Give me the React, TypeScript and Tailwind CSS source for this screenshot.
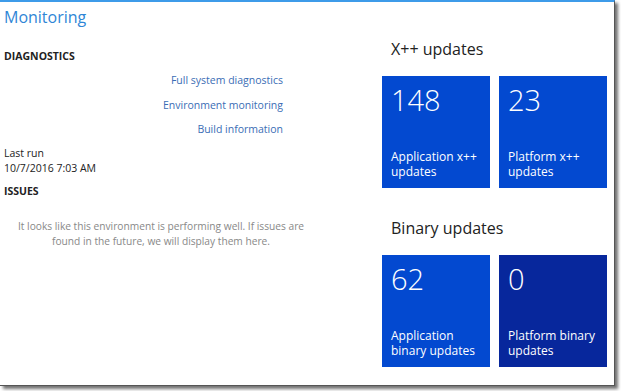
import React from "react";

const font = { fontFamily: '"Open Sans", "Noto Sans", sans-serif' };

function Tile({ value, label, dark }: { value: string; label: string; dark?: boolean }) {
  return (
    <div
      className={`flex h-[112px] w-[108px] flex-col justify-between px-[9px] pt-[7px] pb-[9px] text-white ${
        dark ? "bg-[#07279c]" : "bg-[#0349d0]"
      }`}
    >
      <div className="text-[29px] font-light leading-[34px]">{value}</div>
      <div className="text-[12px] leading-[15px]">{label}</div>
    </div>
  );
}

export default function App() {
  return (
    <div className="h-[391px] w-[621px] bg-white" style={font}>
      <div className="h-[386px] w-[615px] border-t-2 border-r border-b border-t-[#3d9be9] border-r-[#555] border-b-[#555] shadow-[3px_3px_3px_rgba(0,0,0,0.55)]">
        <h1 className="pl-[4px] pt-[3px] text-[16px] leading-[24px] text-[#2f86d6]">Monitoring</h1>
        <div className="flex">
          <div className="w-[330px] pl-[4px]">
            <div className="mt-[19px] text-[10.5px] leading-[16px] font-bold text-[#222]">DIAGNOSTICS</div>
            <div className="mt-[8px] flex w-[279px] flex-col items-end gap-[8.5px] text-[10.5px] leading-[16px] text-[#3a6db5]">
              <span>Full system diagnostics</span>
              <span>Environment monitoring</span>
              <span>Build information</span>
            </div>
            <div className="mt-[9px] text-[10.5px] leading-[15px] text-[#222]">
              <div>Last run</div>
              <div>10/7/2016 7:03 AM</div>
            </div>
            <div className="mt-[7px] text-[10.5px] leading-[16px] font-bold text-[#222]">ISSUES</div>
            <p className="ml-[7px] mt-[20px] w-[300px] text-center text-[10.2px] leading-[15px] text-[#888]">
              It looks like this environment is performing well. If issues are found in the future, we will display them here.
            </p>
          </div>
          <div className="pl-[52px]">
            <div className="mt-[9px] pl-[9px] text-[16px] leading-[22px] text-[#222]">X++ updates</div>
            <div className="mt-[16px] flex gap-[9px]">
              <Tile value="148" label="Application x++ updates" />
              <Tile value="23" label="Platform x++ updates" />
            </div>
            <div className="mt-[29px] pl-[9px] text-[16px] leading-[22px] text-[#222]">Binary updates</div>
            <div className="mt-[16px] flex gap-[9px]">
              <Tile value="62" label="Application binary updates" />
              <Tile value="0" label="Platform binary updates" dark />
            </div>
          </div>
        </div>
      </div>
    </div>
  );
}
